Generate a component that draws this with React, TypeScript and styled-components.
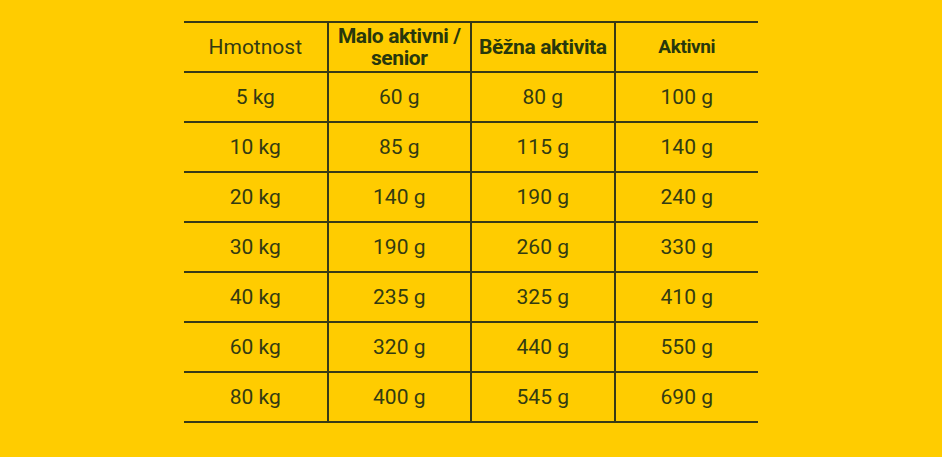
import React from 'react';
import styled, { createGlobalStyle } from 'styled-components';

const GlobalStyle = createGlobalStyle`
  html, body {
    margin: 0;
    padding: 0;
    background: #ffcc00;
  }
`;

const rows: [string, string, string, string][] = [
  ['5 kg', '60 g', '80 g', '100 g'],
  ['10 kg', '85 g', '115 g', '140 g'],
  ['20 kg', '140 g', '190 g', '240 g'],
  ['30 kg', '190 g', '260 g', '330 g'],
  ['40 kg', '235 g', '325 g', '410 g'],
  ['60 kg', '320 g', '440 g', '550 g'],
  ['80 kg', '400 g', '545 g', '690 g'],
];

const App = () => {
  return (
    <>
      <GlobalStyle />
      <Page>
        <Table>
          <thead>
            <tr>
              <HeadCell>Hmotnost</HeadCell>
              <HeadCell bold>
                Malo aktivni /<br />
                senior
              </HeadCell>
              <HeadCell bold>Běžna aktivita</HeadCell>
              <HeadCell bold small>
                Aktivni
              </HeadCell>
            </tr>
          </thead>
          <tbody>
            {rows.map((row) => (
              <tr key={row[0]}>
                {row.map((value, index) => (
                  <Cell key={index}>{value}</Cell>
                ))}
              </tr>
            ))}
          </tbody>
        </Table>
      </Page>
    </>
  );
};

export default App;

const Page = styled.div`
  width: 942px;
  height: 457px;
  padding-top: 21px;
  box-sizing: border-box;
  display: flex;
  justify-content: center;
  align-items: flex-start;
  background: #ffcc00;
  font-family: Roboto, 'Noto Sans', sans-serif;
  color: #333b12;
`;

const Table = styled.table`
  width: 574px;
  border-collapse: collapse;
  table-layout: fixed;

  tr {
    border-top: 2px solid #383a16;
    border-bottom: 2px solid #383a16;
  }

  td + td,
  th + th {
    border-left: 2px solid #383a16;
  }
`;

const HeadCell = styled.th<{ bold?: boolean; small?: boolean }>`
  height: 48px;
  padding: 0;
  text-align: center;
  vertical-align: middle;
  font-weight: ${(props) => (props.bold ? 700 : 400)};
  font-size: ${(props) => (props.small ? '19px' : '21px')};
  line-height: 22px;
  color: ${(props) => (props.bold ? '#28380c' : '#333b12')};
  white-space: nowrap;
  letter-spacing: ${(props) => (props.bold ? '-0.4px' : '0')};
`;

const Cell = styled.td`
  height: 48px;
  padding: 0;
  text-align: center;
  vertical-align: middle;
  font-size: 21px;
  line-height: 22px;
`;
